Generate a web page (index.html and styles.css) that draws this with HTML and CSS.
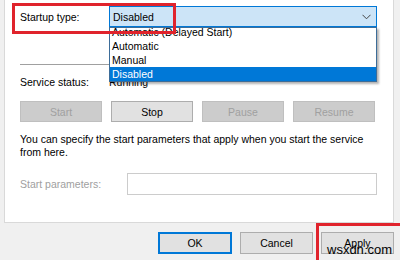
FILE: index.html
```html
<!DOCTYPE html>
<html lang="en">
<head>
    <meta charset="UTF-8">
    <meta name="viewport" content="width=device-width, initial-scale=1.0">
    <title>Service Properties</title>
    <link rel="stylesheet" href="styles.css">
</head>
<body>
    <div class="dialog">
        <div class="panel">
            <div class="row startup-row">
                <span class="label">Startup type:</span>
                <div class="combo">
                    <span>Disabled</span>
                    <svg class="chevron" width="9" height="6" viewBox="0 0 9 6">
                        <path d="M0.5 0.8 L4.5 4.8 L8.5 0.8" fill="none" stroke="#444" stroke-width="1"/>
                    </svg>
                </div>
                <ul class="dropdown">
                    <li>Automatic (Delayed Start)</li>
                    <li>Automatic</li>
                    <li>Manual</li>
                    <li class="selected">Disabled</li>
                </ul>
            </div>

            <div class="separator"></div>

            <div class="row status-row">
                <span class="label">Service status:</span>
                <span>Running</span>
            </div>

            <div class="service-buttons">
                <button class="btn" disabled>Start</button>
                <button class="btn">Stop</button>
                <button class="btn" disabled>Pause</button>
                <button class="btn" disabled>Resume</button>
            </div>

            <p class="hint">You can specify the start parameters that apply when you start the service from here.</p>

            <div class="row params-row">
                <span class="label params-label">Start parameters:</span>
                <input class="params-input" type="text" disabled>
            </div>
        </div>

        <div class="footer">
            <button class="btn footer-btn default">OK</button>
            <button class="btn footer-btn">Cancel</button>
            <button class="btn footer-btn">Apply</button>
        </div>

        <!-- highlight marks and watermark lie over the dialog -->
        <div class="mark mark-startup"></div>
        <div class="mark mark-apply"></div>
        <div class="watermark">wsxdn.com</div>
    </div>
</body>
</html>
```

FILE: styles.css
```css
body {
    margin: 0;
    padding: 0;
    background-color: #f0f0f0;
    font-family: "Liberation Sans", Arial, sans-serif;
    font-size: 10.5px;
    color: #000;
    overflow: hidden;
}

.dialog {
    position: relative;
    width: 400px;
    height: 260px;
}

.panel {
    box-sizing: border-box;
    margin-left: 4px;
    width: 390px;
    height: 223px;
    padding: 6px 0 0 15px;
    background-color: #fff;
    border: 1px solid #d9d9d9;
    border-top: none;
}

.row {
    display: flex;
    align-items: center;
}

.label {
    width: 89px;
    flex-shrink: 0;
}

.startup-row {
    position: relative;
    height: 21px;
}

.combo {
    box-sizing: border-box;
    width: 268px;
    height: 21px;
    padding: 0 0 0 3px;
    display: flex;
    align-items: center;
    justify-content: space-between;
    background-color: #cce4f7;
    border: 1px solid #0078d7;
}

.chevron {
    margin-right: 5px;
}

.dropdown {
    position: absolute;
    top: 21px;
    left: 89px;
    box-sizing: border-box;
    width: 268px;
    height: 55px;
    margin: 0;
    padding: 0;
    list-style: none;
    overflow: hidden;
    background-color: #fff;
    border: 1px solid #3d6d99;
    box-shadow: 2px 2px 2px rgba(0, 0, 0, 0.3);
    z-index: 2;
}

.dropdown li {
    height: 14px;
    line-height: 14px;
    padding-left: 2px;
}

.dropdown li:first-child {
    margin-top: -3px;
}

.dropdown .selected {
    background-color: #0078d7;
    color: #fff;
}

.separator {
    width: 357px;
    height: 1px;
    margin-top: 37px;
    background-color: #a0a0a0;
}

.status-row {
    height: 14px;
    margin-top: 10px;
}

.service-buttons {
    display: flex;
    gap: 9px;
    margin-top: 12px;
}

.btn {
    box-sizing: border-box;
    width: 82px;
    height: 21px;
    padding: 0;
    font-family: inherit;
    font-size: 10.5px;
    color: #000;
    background-color: #e1e1e1;
    border: 1px solid #adadad;
    border-radius: 0;
}

.btn:disabled {
    color: #a0a0a0;
    background-color: #cccccc;
    border-color: #bfbfbf;
}

.hint {
    margin: 11px 0 0 0;
    width: 360px;
    line-height: 13px;
}

.params-row {
    margin-top: 14px;
}

.params-label {
    width: 107px;
    color: #a0a0a0;
}

.params-input {
    box-sizing: border-box;
    width: 250px;
    height: 22px;
    margin: 0;
    background-color: #fff;
    border: 1px solid #cccccc;
}

.footer {
    display: flex;
    justify-content: flex-end;
    gap: 8px;
    margin-top: 9px;
    padding-right: 6px;
}

.footer-btn {
    width: 73px;
    height: 22px;
}

.footer-btn.default {
    width: 74px;
    border: 2px solid #0078d7;
}

.mark {
    position: absolute;
    box-sizing: border-box;
    border: 3px solid #e0232c;
    z-index: 3;
}

.mark-startup {
    left: 12px;
    top: 3px;
    width: 164px;
    height: 31px;
}

.mark-apply {
    left: 316px;
    top: 223px;
    width: 90px;
    height: 44px;
}

.watermark {
    position: absolute;
    left: 327px;
    top: 242px;
    font-family: "Liberation Sans", Arial, sans-serif;
    font-size: 13px;
    color: #000;
    z-index: 4;
}
```
